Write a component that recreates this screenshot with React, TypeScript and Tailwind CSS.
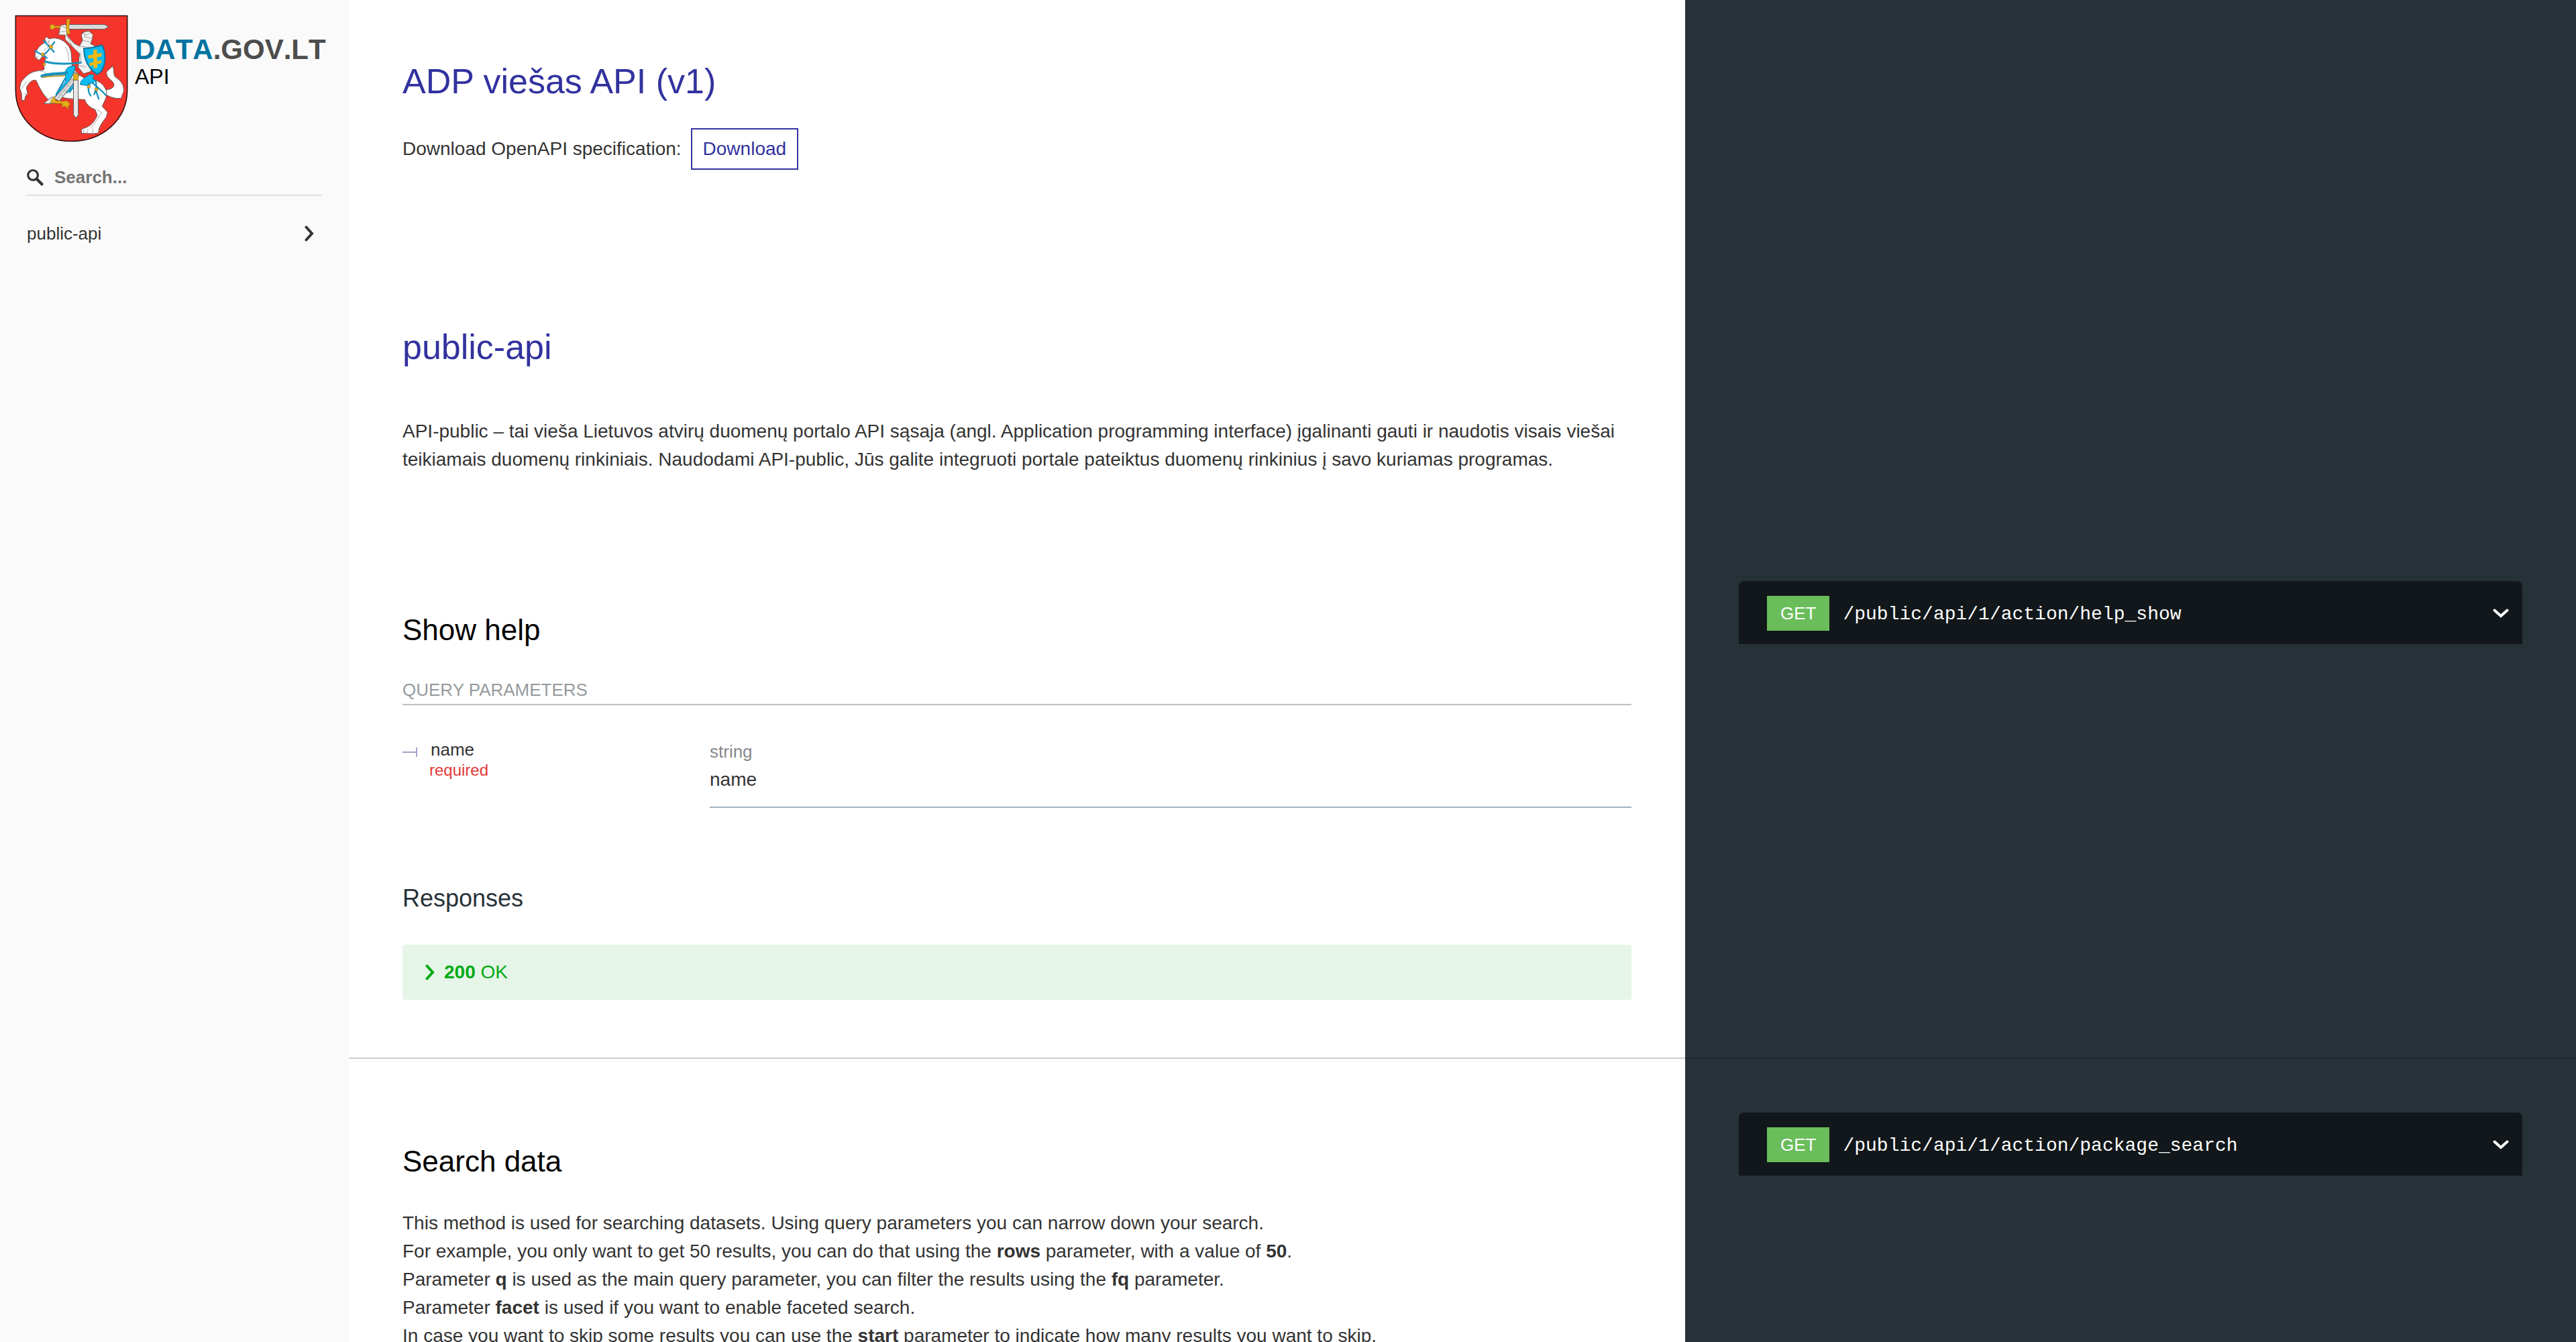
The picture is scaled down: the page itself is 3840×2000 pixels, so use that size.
import type { ReactNode } from "react";

function CoatOfArms() {
  return (
    <svg viewBox="36 36 508 570" className="h-[190px] w-[169px] shrink-0" role="img" aria-label="Vytis">
      <path d="M40 40H540V372C540 505 430 602 290 602S40 505 40 372Z" fill="#f5352c" stroke="#3a1210" strokeWidth="5" />
      <g stroke="#5b5552" strokeWidth="3" strokeLinejoin="round" strokeLinecap="round">
        {/* tail */}
        <path d="M432 372C458 372 484 366 480 346C474 326 448 322 447 298C447 282 462 284 474 264C484 284 476 302 486 314C506 326 526 346 524 374C524 390 512 396 516 408C494 414 470 408 446 394Z" fill="#fff" />
        {/* horse body with legs */}
        <path d="M176 158L170 144L178 134L190 144L206 140C240 138 270 158 284 188C294 212 288 238 294 264C310 300 350 330 384 324C420 334 442 352 448 386C448 410 436 424 428 446L452 472L446 494C434 510 422 524 414 546L410 566L382 568L334 566L336 548L356 540C384 530 396 506 406 486L396 460C372 452 356 436 350 416C310 412 268 414 240 402C214 420 194 424 184 414C162 392 146 362 132 330C112 322 96 346 88 362L94 392C82 394 82 410 80 420L68 418L66 386L58 364L64 338C84 310 106 292 132 288C148 282 160 288 168 280L166 254C176 240 176 224 168 214L144 240L126 224L128 206C140 184 150 168 176 158Z" fill="#fff" />
        <path d="M148 288C170 286 186 300 172 318M262 180C280 204 276 228 278 242M66 366L90 336M404 460L426 474C412 492 396 520 376 544M348 550L340 566M366 548L358 566M386 546L384 566M78 388L92 392M130 222L142 226M176 166L190 150L188 178L166 196" fill="none" stroke="#a5a5a5" />
        {/* rider */}
        <path d="M236 108L240 84L262 78L270 90L270 128L302 164L326 176L340 150L334 126L346 112L368 108L386 124L384 142L376 166L402 178L396 232L376 290L344 300L320 270L326 210L304 188L262 146L262 126L234 126Z" fill="#f1f1f1" />
        <path d="M270 128L294 176M346 114L350 134L382 142M342 150L374 158M326 176L374 182M330 206L332 252M322 262L354 270M246 88L268 94M240 112L262 110M350 126L372 120" fill="none" stroke="#a5a5a5" />
        {/* saddle cloth and straps */}
        <path d="M262 296C264 270 290 258 308 268L298 302C308 326 322 324 318 350L272 384L218 400L252 350C274 330 260 318 262 296Z" fill="#0bbcf2" stroke="#0875a0" />
        <path d="M330 348C328 326 352 318 370 304L390 304L386 322L400 332C378 342 364 358 344 350Z" fill="#0bbcf2" stroke="#0875a0" />
        {/* rider leg */}
        <path d="M304 292L326 306L288 356L236 422L212 410L248 370L282 330Z" fill="#dedede" />
        <path d="M286 324L312 332M266 350L288 358M250 368L272 378M234 386L252 400M312 304L228 410" fill="none" stroke="#a5a5a5" />
        <path d="M166 432L202 404L220 420L218 432L188 434Z" fill="#ececec" />
        {/* scabbard */}
        <path d="M300 328H320L321 484L310 498L300 484Z" fill="#e9e9e9" />
        {/* sword */}
        <path d="M276 79H438L457 89L438 100H276Z" fill="#dadada" />
      </g>
      <g fill="none" stroke="#1792bf" strokeWidth="9" strokeLinecap="round" strokeLinejoin="round">
        <path d="M174 246C220 258 280 256 332 250" />
        <path d="M158 310C194 298 234 302 268 296" strokeWidth="14" />
        <path d="M166 152L212 202M214 158L184 198L160 220M128 198L180 228" strokeWidth="7" />
        <path d="M384 340C410 364 426 374 444 396M368 340C362 372 368 388 376 398M400 336L402 382L412 412M398 374L392 392" strokeWidth="7" />
        <path d="M262 320L222 392M294 364L282 382" strokeWidth="7" />
      </g>
      <path d="M160 316C200 308 230 312 262 308" fill="none" stroke="#c7971f" strokeWidth="5" />
      {/* shield with the double cross */}
      <path d="M346 186C374 188 402 176 428 172C444 204 444 250 430 276C424 290 414 298 404 302C370 278 346 240 346 186Z" fill="#0bbcf2" stroke="#0875a0" strokeWidth="6" />
      <path d="M388 194L404 190L406 272L390 276ZM364 218L424 206L426 222L366 232ZM370 252L424 238L424 252L372 266Z" fill="#f8b80e" />
      {/* gilded details */}
      <g fill="#e6b017" stroke="#8c671d" strokeWidth="2" strokeLinejoin="round">
        <path d="M270 54H284L278 92L284 120L270 124L266 92Z" />
        <path d="M194 82L208 78L214 86H240V94H214L208 102L194 98Z" />
        <path d="M300 300H320V328H300Z" />
        <path d="M212 400L220 420L252 424L268 420L286 436L276 442L276 458L262 446L246 448L250 434L220 432L194 430Z" />
        <circle cx="198" cy="179" r="8" />
        <circle cx="162" cy="213" r="7" />
        <circle cx="168" cy="258" r="6" />
        <circle cx="368" cy="357" r="7" />
        <circle cx="402" cy="370" r="7" />
      </g>
    </svg>
  );
}

function Chevron({ className }: { className: string }) {
  return (
    <svg viewBox="0 0 14 24" className={className} fill="none" stroke="currentColor" strokeWidth="4" strokeLinecap="round" aria-hidden="true">
      <path d="M2.5 2.5L11 12L2.5 21.5" />
    </svg>
  );
}

function Sidebar() {
  return (
    <aside className="w-[520px] shrink-0 bg-[#fafafa]">
      <a href="#top" className="flex gap-2.5 pt-[22px] pl-[22px]">
        <CoatOfArms />
        <span className="flex flex-col pt-[28px]">
          <span className="text-[42px] leading-[48px] font-bold text-[#4d4d4d] [font-kerning:none]">
            <span className="text-[#0073a1]">DATA</span>.GOV.LT
          </span>
          <span className="text-[32px] leading-[32px] text-black">API</span>
        </span>
      </a>
      <label className="mx-10 mt-9 flex items-center gap-4 border-b-2 border-[#e1e1e1] pb-2.5">
        <svg viewBox="0 0 1000 1000" className="size-[25px] shrink-0" fill="#333" aria-hidden="true">
          <path d="M968.2,849.4L667.3,549c83.9-136.5,66.7-317.4-51.7-435.6C477.1-25,252.5-25,113.9,113.4c-138.5,138.3-138.5,362.6,0,501C219.2,730.1,413.2,743,547.6,666.5l301.9,301.4c43.6,43.6,76.9,14.9,104.2-12.4C981,928.3,1011.8,893,968.2,849.4z M524.5,522c-88.9,88.7-233,88.7-321.8,0c-88.9-88.7-88.9-232.6,0-321.3c88.9-88.7,233-88.7,321.8,0C613.4,289.4,613.4,433.3,524.5,522z" />
        </svg>
        <input type="text" aria-label="Search" placeholder="Search..." className="h-[32px] min-w-0 flex-1 bg-transparent text-[26px] leading-[32px] font-bold outline-none placeholder:text-[#757575]" />
      </label>
      <nav className="mt-10">
        <a href="#public-api" className="flex items-center justify-between pr-[52px] pl-10 text-[26px] leading-[32px]">
          public-api
          <Chevron className="h-[24px] w-[14px]" />
        </a>
      </nav>
    </aside>
  );
}

function Section({ children, sample, className = "" }: { children: ReactNode; sample?: ReactNode; className?: string }) {
  return (
    <section className={`flex ${className}`}>
      <div className="w-3/5 px-20">{children}</div>
      <div className="w-2/5 px-20">{sample}</div>
    </section>
  );
}

function Endpoint({ path }: { path: string }) {
  return (
    <button type="button" className="flex w-full items-baseline rounded-t-lg bg-[#11171a] pt-[22px] pr-5 pb-5 pl-[42px] text-left text-white">
      <span className="bg-[#6bbd5b] px-5 text-[26px] leading-[52px]">GET</span>
      <span className="ml-5 flex-1 font-['Liberation_Mono',monospace] text-[28px] leading-[42px]">{path}</span>
      <svg viewBox="0 0 24 14" className="h-[14px] w-[24px] self-center" fill="none" stroke="currentColor" strokeWidth="4" strokeLinecap="round" aria-hidden="true">
        <path d="M2.5 2.5L12 11L21.5 2.5" />
      </svg>
    </button>
  );
}

export default function App() {
  return (
    <div id="top" className="flex h-screen overflow-hidden bg-white font-['Liberation_Sans',sans-serif] text-[28px] leading-[42px] text-[#333]">
      <Sidebar />
      <main className="min-w-0 flex-1 self-start bg-[linear-gradient(to_right,#fff_60%,#263238_60%)]">
        <Section className="pt-20">
          <h1 className="text-[52px] leading-[83px] text-[#32329f]">ADP viešas API (v1)</h1>
          <p className="mt-7">
            Download OpenAPI specification:
            <a href="#download" className="ml-3.5 inline-block border-2 border-[#32329f] px-4 py-2 text-[#32329f]">
              Download
            </a>
          </p>
        </Section>

        <Section className="pt-[223px]">
          <h1 id="public-api" className="text-[52px] leading-[83px] text-[#32329f]">public-api</h1>
          <p className="mt-[63px]">
            API-public – tai vieša Lietuvos atvirų duomenų portalo API sąsaja (angl. Application programming interface) įgalinanti gauti ir naudotis visais viešai teikiamais duomenų rinkiniais. Naudodami API-public, Jūs galite integruoti portale pateiktus duomenų rinkinius į savo kuriamas programas.
          </p>
        </Section>

        <Section
          className="mt-20 border-b-2 border-black/20 pt-20 pb-[86px]"
          sample={<Endpoint path="/public/api/1/action/help_show" />}
        >
          <h2 className="mt-[38px] text-[44px] leading-[70px] text-black">Show help</h2>
          <h5 className="mt-[33px] border-b-2 border-[#263238]/30 text-[26px] leading-[42px] text-[#263238]/50">QUERY PARAMETERS</h5>
          <table className="mt-12 w-full border-separate border-spacing-0">
            <tbody>
              <tr>
                <td className="w-1/4 align-top">
                  <div className="flex items-start">
                    <span className="mt-[15px] flex items-center" aria-hidden="true">
                      <span className="h-[2px] w-5 bg-[#a3a3c9]" />
                      <span className="h-[14px] w-[2px] bg-[#a3a3c9]" />
                    </span>
                    <span className="ml-[18px] flex flex-col">
                      <span className="pl-[2px] text-[26px] leading-[36px]">name</span>
                      <span className="text-[24px] leading-[26px] text-[#e53935]">required</span>
                    </span>
                  </div>
                </td>
                <td className="border-b-2 border-[#9fb4be] pb-[19px] align-top">
                  <div className="text-[26px] leading-[42px] text-[#333]/60">string</div>
                  <div>name</div>
                </td>
              </tr>
            </tbody>
          </table>
          <h3 className="mt-[106px] text-[36px] leading-[58px] text-[#263238]">Responses</h3>
          <button type="button" className="mt-10 flex w-full items-center rounded-sm bg-[#e5f5e7] py-5 pl-[34px] text-left text-[#00aa13]">
            <Chevron className="mr-3.5 h-[24px] w-[14px]" />
            <span><strong>200</strong> OK</span>
          </button>
        </Section>

        <Section
          className="pt-20 pb-20"
          sample={<Endpoint path="/public/api/1/action/package_search" />}
        >
          <h2 className="mt-[38px] text-[44px] leading-[70px] text-black">Search data</h2>
          <p className="mt-9">
            This method is used for searching datasets. Using query parameters you can narrow down your search.<br />
            For example, you only want to get 50 results, you can do that using the <strong>rows</strong> parameter, with a value of <strong>50</strong>.<br />
            Parameter <strong>q</strong> is used as the main query parameter, you can filter the results using the <strong>fq</strong> parameter.<br />
            Parameter <strong>facet</strong> is used if you want to enable faceted search.<br />
            In case you want to skip some results you can use the <strong>start</strong> parameter to indicate how many results you want to skip.
          </p>
        </Section>
      </main>
    </div>
  );
}
